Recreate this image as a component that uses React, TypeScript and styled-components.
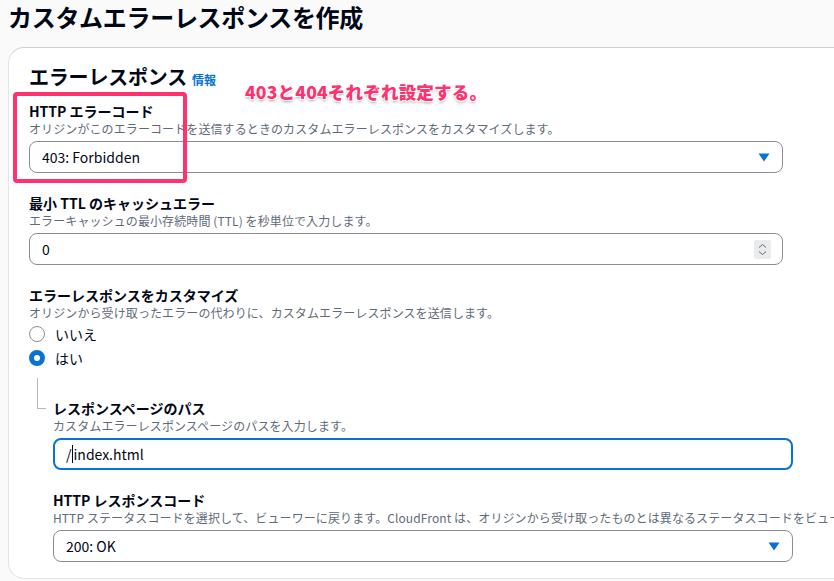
import React from "react";
import styled, { createGlobalStyle } from "styled-components";

const Global = createGlobalStyle`
  html, body { margin: 0; padding: 0; }
  body {
    background: #fafafa;
    overflow: hidden;
    font-family: "Noto Sans CJK JP", "Noto Sans", sans-serif;
    color: #000716;
  }
`;

const Page = styled.div`
  width: 834px;
  height: 581px;
  overflow: hidden;
  padding-left: 8px;
  box-sizing: border-box;
`;

const Title = styled.h1`
  margin: 0;
  font-size: 24px;
  line-height: 32px;
  font-weight: 700;
  letter-spacing: -0.3px;
  padding-top: 1px;
`;

const Card = styled.section`
  position: relative;
  margin-top: 14px;
  width: 900px;
  background: #fff;
  border: 1px solid #e3e4e8;
  border-top-color: #cfd0d6;
  border-radius: 16px;
  padding: 15px 20px 16px 20px;
  box-sizing: border-box;
`;

const HeadRow = styled.div`
  display: flex;
  align-items: baseline;
  gap: 5px;
  height: 28px;
`;

const Heading = styled.h2`
  margin: 0;
  font-size: 20px;
  line-height: 28px;
  font-weight: 700;
  letter-spacing: -0.2px;
`;

const InfoLink = styled.span`
  font-size: 12px;
  font-weight: 700;
  color: #0972d3;
`;

const Field = styled.div<{ $width: number; $top: number }>`
  width: ${(p) => p.$width}px;
  margin-top: ${(p) => p.$top}px;
  display: flex;
  flex-direction: column;
`;

const Label = styled.div`
  font-size: 14px;
  line-height: 20px;
  font-weight: 700;
  white-space: nowrap;
`;

const Desc = styled.div`
  font-size: 12px;
  line-height: 16px;
  color: #5f6b7a;
  white-space: nowrap;
  margin-bottom: 4px;
  letter-spacing: 0.1px;
`;

const Box = styled.div<{ $focused?: boolean }>`
  height: 32px;
  box-sizing: border-box;
  border: ${(p) => (p.$focused ? "2px solid #0972d3" : "1px solid #8c8c94")};
  border-radius: 8px;
  padding: 0 ${(p) => (p.$focused ? 11 : 12)}px;
  display: flex;
  align-items: center;
  justify-content: space-between;
  font-size: 14px;
  background: #fff;
`;

const Value = styled.span`
  font-size: 14px;
  line-height: 20px;
  display: flex;
  align-items: center;
`;

const Cursor = styled.span`
  display: inline-block;
  width: 1px;
  height: 18px;
  background: #000716;
  margin: 0 1px 0 0;
`;

const Spinner = styled.div`
  width: 17px;
  height: 19px;
  background: #e9ebed;
  border-radius: 2px;
  display: flex;
  align-items: center;
  justify-content: center;
  margin-right: -1px;
`;

const RadioGroup = styled.div`
  display: flex;
  flex-direction: column;
  margin-top: -3px;
`;

const RadioRow = styled.div`
  display: flex;
  align-items: center;
  height: 24px;
  gap: 10px;
  font-size: 14px;
`;

const RadioCircle = styled.span<{ $checked?: boolean }>`
  width: 16px;
  height: 16px;
  box-sizing: border-box;
  border-radius: 50%;
  border: ${(p) => (p.$checked ? "5px solid #0972d3" : "1.5px solid #8c8c94")};
  background: #fff;
  flex: none;
`;

const NestedRow = styled.div`
  display: flex;
  margin-top: 8px;
`;

const Connector = styled.div`
  flex: none;
  width: 9px;
  height: 31px;
  margin-left: 8px;
  margin-right: 7px;
  border-left: 1px solid #b6b8bf;
  border-bottom: 1px solid #b6b8bf;
  box-sizing: border-box;
`;

const NestedContent = styled.div`
  padding-top: 20px;
  display: flex;
  flex-direction: column;
`;

const Highlight = styled.div`
  position: absolute;
  left: 4px;
  top: 44px;
  width: 174px;
  height: 91px;
  border: 4px solid #fd326f;
  border-radius: 4px;
  box-sizing: border-box;
  pointer-events: none;
`;

const Annotation = styled.div`
  position: absolute;
  left: 236px;
  top: 32px;
  font-size: 17.5px;
  line-height: 24px;
  font-weight: 900;
  color: #fd326f;
  white-space: nowrap;
  letter-spacing: 0.2px;
  text-shadow: -1px -1px 0 #fff, 1px -1px 0 #fff, -1px 1px 0 #fff, 1px 1px 0 #fff,
    0 2px 3px rgba(0, 0, 0, 0.35);
`;

const Caret = () => (
  <svg width="12" height="9" viewBox="0 0 12 9">
    <path d="M0.5 0.5 H11.5 L6 8.5 Z" fill="#0972d3" />
  </svg>
);

const SpinIcon = () => (
  <svg width="9" height="13" viewBox="0 0 9 13">
    <path d="M1 4.5 L4.5 1.5 L8 4.5" stroke="#5f6b7a" strokeWidth="1" fill="none" />
    <path d="M1 8.5 L4.5 11.5 L8 8.5" stroke="#5f6b7a" strokeWidth="1" fill="none" />
  </svg>
);

export default function App() {
  return (
    <>
      <Global />
      <Page>
        <Title>カスタムエラーレスポンスを作成</Title>
        <Card>
          <HeadRow>
            <Heading>エラーレスポンス</Heading>
            <InfoLink>情報</InfoLink>
          </HeadRow>

          <Field $width={754} $top={10}>
            <Label>HTTP エラーコード</Label>
            <Desc>オリジンがこのエラーコードを送信するときのカスタムエラーレスポンスをカスタマイズします。</Desc>
            <Box>
              <Value>403: Forbidden</Value>
              <Caret />
            </Box>
          </Field>

          <Field $width={754} $top={20}>
            <Label>最小 TTL のキャッシュエラー</Label>
            <Desc>エラーキャッシュの最小存続時間 (TTL) を秒単位で入力します。</Desc>
            <Box>
              <Value>0</Value>
              <Spinner>
                <SpinIcon />
              </Spinner>
            </Box>
          </Field>

          <Field $width={754} $top={20}>
            <Label>エラーレスポンスをカスタマイズ</Label>
            <Desc>オリジンから受け取ったエラーの代わりに、カスタムエラーレスポンスを送信します。</Desc>
            <RadioGroup>
              <RadioRow>
                <RadioCircle />
                いいえ
              </RadioRow>
              <RadioRow>
                <RadioCircle $checked />
                はい
              </RadioRow>
            </RadioGroup>
          </Field>

          <NestedRow>
            <Connector />
            <NestedContent>
              <Field $width={740} $top={0}>
                <Label>レスポンスページのパス</Label>
                <Desc>カスタムエラーレスポンスページのパスを入力します。</Desc>
                <Box $focused>
                  <Value>
                    /<Cursor />index.html
                  </Value>
                </Box>
              </Field>
              <Field $width={740} $top={20}>
                <Label>HTTP レスポンスコード</Label>
                <Desc>
                  HTTP ステータスコードを選択して、ビューワーに戻ります。CloudFront は、オリジンから受け取ったものとは異なるステータスコードをビューワーに返すことができます。
                </Desc>
                <Box>
                  <Value>200: OK</Value>
                  <Caret />
                </Box>
              </Field>
            </NestedContent>
          </NestedRow>

          <Highlight />
          <Annotation>403と404それぞれ設定する。</Annotation>
        </Card>
      </Page>
    </>
  );
}
